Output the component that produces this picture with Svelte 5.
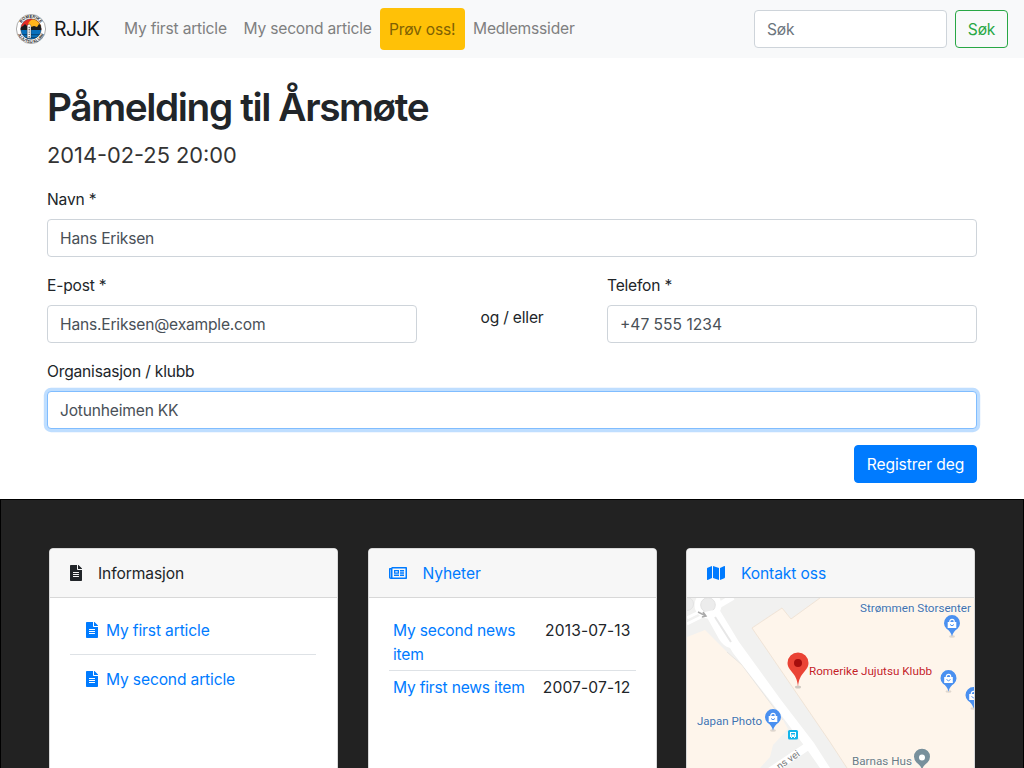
<script>
  const file = 'M224 136V0H24C10.7 0 0 10.7 0 24v464c0 13.3 10.7 24 24 24h336c13.3 0 24-10.7 24-24V160H248c-13.2 0-24-10.8-24-24zm64 236c0 6.6-5.4 12-12 12H108c-6.6 0-12-5.4-12-12v-8c0-6.6 5.4-12 12-12h168c6.6 0 12 5.4 12 12v8zm0-64c0 6.6-5.4 12-12 12H108c-6.6 0-12-5.4-12-12v-8c0-6.6 5.4-12 12-12h168c6.6 0 12 5.4 12 12v8zm0-72v8c0 6.6-5.4 12-12 12H108c-6.6 0-12-5.4-12-12v-8c0-6.6 5.4-12 12-12h168c6.6 0 12 5.4 12 12zm96-114.1v6.1H256V0h6.1c6.4 0 12.5 2.5 17 7l97.9 98c4.5 4.5 7 10.6 7 16.9z';
  const newspaper = 'M552 64H112c-20.858 0-38.643 13.377-45.248 32H24c-13.255 0-24 10.745-24 24v272c0 30.928 25.072 56 56 56h496c13.255 0 24-10.745 24-24V88c0-13.255-10.745-24-24-24zM48 392V144h16v248c0 4.411-3.589 8-8 8s-8-3.589-8-8zm480 8H111.422c.374-2.614.578-5.283.578-8V112h416v288zM172 280h136c6.627 0 12-5.373 12-12v-96c0-6.627-5.373-12-12-12H172c-6.627 0-12 5.373-12 12v96c0 6.627 5.373 12 12 12zm28-80h80v40h-80v-40zm-40 140v-24c0-6.627 5.373-12 12-12h136c6.627 0 12 5.373 12 12v24c0 6.627-5.373 12-12 12H172c-6.627 0-12-5.373-12-12zm192 0v-24c0-6.627 5.373-12 12-12h104c6.627 0 12 5.373 12 12v24c0 6.627-5.373 12-12 12H364c-6.627 0-12-5.373-12-12zm0-144v-24c0-6.627 5.373-12 12-12h104c6.627 0 12 5.373 12 12v24c0 6.627-5.373 12-12 12H364c-6.627 0-12-5.373-12-12zm0 72v-24c0-6.627 5.373-12 12-12h104c6.627 0 12 5.373 12 12v24c0 6.627-5.373 12-12 12H364c-6.627 0-12-5.373-12-12z';
  const mapIcon = 'M0 117.66v346.32c0 11.32 11.43 19.06 21.94 14.86L160 416V32L20.12 87.95A32.006 32.006 0 0 0 0 117.66zM192 416l192 64V96L192 32v384zM554.06 33.16L416 96v384l139.88-55.95A31.996 31.996 0 0 0 576 394.34V48.02c0-11.32-11.43-19.06-21.94-14.86z';
  const articles = ['My first article', 'My second article'];
  const news = [
    { title: 'My second news item', date: '2013-07-13' },
    { title: 'My first news item', date: '2007-07-12' }
  ];
  const shops = [[952, 624], [948.5, 679], [973.5, 696], [773, 718]];
</script>

<div class="page">
  <nav class="navbar">
    <a class="brand" href="#top">
      <svg class="logo" viewBox="0 0 30 30" width="30" height="30">
        <defs>
          <clipPath id="disc"><circle cx="15" cy="15" r="10.3" /></clipPath>
          <path id="arc-top" d="M3.9 15a11.1 11.1 0 0 1 22.2 0" />
          <path id="arc-bottom" d="M1 15a14 14 0 0 0 28 0" />
        </defs>
        <circle cx="15" cy="15" r="14.6" fill="#fff" stroke="#777" stroke-width=".6" />
        <g clip-path="url(#disc)">
          <path fill="#e52b25" d="M4 4h22v12H4z" />
          <circle cx="18.5" cy="11.5" r="6.5" fill="#ffb51b" />
          <path fill="#151b20" d="M4 13.500l3-1.500 2-2 2 2 4 1 3-1 3 1 2-3 3 2v5H4z" />
          <path fill="#0870bd" d="M4 16h22v10H4z" />
          <path fill="#064b80" d="M4 20h22v1.200H4zM4 23h22v1H4z" />
          <path fill="#fff" stroke="#222" stroke-width=".4" d="M11.200 11.500l1.900-1.500 1.900 1.500v12.700h-3.800z" />
          <path stroke="#555" stroke-width="1.200" stroke-dasharray="1.4 .9" d="M13.200 12.800v11" />
        </g>
        <circle cx="15" cy="15" r="10.3" fill="none" stroke="#222" stroke-width=".4" />
        <text class="ring top"><textPath href="#arc-top" startOffset="50%" text-anchor="middle">ROMERIKE</textPath></text>
        <text class="ring"><textPath href="#arc-bottom" startOffset="50%" text-anchor="middle">JUJUTSU KLUBB</textPath></text>
      </svg>
      <span>RJJK</span>
    </a>
    <a class="nav-link first" href="#a1">My first article</a>
    <a class="nav-link second" href="#a2">My second article</a>
    <a class="nav-link try" href="#try">Prøv oss!</a>
    <a class="nav-link" href="#members">Medlemssider</a>
    <form class="search">
      <input class="control" placeholder="Søk" />
      <button class="btn outline" type="button">Søk</button>
    </form>
  </nav>

  <main>
    <h1>Påmelding til Årsmøte</h1>
    <p class="date">2014-02-25 20:00</p>
    <form>
      <div class="group">
        <label for="name">Navn *</label>
        <input id="name" class="control" value="Hans Eriksen" />
      </div>
      <div class="row">
        <div class="group">
          <label for="email">E-post *</label>
          <input id="email" class="control" value="Hans.Eriksen@example.com" />
        </div>
        <div class="or">og / eller</div>
        <div class="group">
          <label for="phone">Telefon *</label>
          <input id="phone" class="control phone" value="+47 555 1234" />
        </div>
      </div>
      <div class="group">
        <label for="org">Organisasjon / klubb</label>
        <input id="org" class="control focused" value="Jotunheimen KK" />
      </div>
      <div class="actions"><button class="btn primary" type="button">Registrer deg</button></div>
    </form>
  </main>

  <footer>
    <section class="card">
      <header>
        <svg viewBox="0 0 384 512" width="12" height="16"><path d={file} /></svg>
        <span>Informasjon</span>
      </header>
      <ul>
        {#each articles as title}
          <li>
            <a href="#article">
              <svg viewBox="0 0 384 512" width="12" height="16"><path d={file} /></svg><span>{title}</span>
            </a>
          </li>
        {/each}
      </ul>
    </section>

    <section class="card">
      <header class="link">
        <svg viewBox="0 0 576 512" width="18" height="16"><path d={newspaper} /></svg>
        <span>Nyheter</span>
      </header>
      <div class="news">
        {#each news as item}
          <div class="item"><a href="#news">{item.title}</a><span>{item.date}</span></div>
        {/each}
      </div>
    </section>

    <section class="card">
      <header class="link">
        <svg viewBox="0 0 576 512" width="18" height="16"><path d={mapIcon} /></svg>
        <span>Kontakt oss</span>
      </header>
      <svg class="map" viewBox="687 598 287 170" width="287" height="170">
        <defs>
          <g id="shop">
            <ellipse cx="0" cy="12.5" rx="3" ry="1.2" fill="#000" opacity=".12" />
            <path fill="#4a90f0" d="M0 12.5C-1 8.500-3 6.500-5.500 4.800A8 8 0 1 1 5.500 4.800C3 6.500 1 8.500 0 12.500z" />
            <path fill="#fff" d="M-4.300-2h8.600v6h-8.600z" />
            <path fill="none" stroke="#fff" stroke-width="1.200" d="M-2.200-1.500v-1a2.200 2.200 0 0 1 4.400 0v1" />
            <path fill="none" stroke="#4a90f0" stroke-width="1" d="M-2 .5q2 2.600 4 0" />
          </g>
        </defs>
        <path fill="#f1f1f0" d="M687 598h287v170H687z" />
        <path fill="#fef5eb" d="M752 628l30-20 9 11 29-21h154v170H847l-17-26z" />
        <path fill="#fef5eb" d="M687 637l18-7 22 22 15 13 41 55 5 9-15 16-3 12-10 11h-73z" />
        <path fill="none" stroke="#eee0d1" stroke-width=".8" d="M820 598l-29 21-9-11-30 20 78 114 17 26" />
        <path fill="none" stroke="#e9e6e2" stroke-width="1" d="M727 652l15 13 41 55" />
        <path fill="none" stroke="#fff" stroke-width="3" d="M687 618l12-6M687 624l14-7" />
        <path fill="none" stroke="#fff" stroke-width="6" d="M716 607l17-10" />
        <circle cx="708" cy="605" r="10" fill="none" stroke="#fff" stroke-width="7" />
        <circle cx="708" cy="605" r="7.300" fill="#ececec" stroke="#e2e2e2" />
        <circle cx="687" cy="604" r="6.500" fill="#ececec" stroke="#e2e2e2" />
        <path fill="#fff" d="M704 612l15-3 20 33 42 58 33 43 16 25h-10l-14-20-34-45-39-50-3-5q-7-2-11-9z" />
        <path fill="none" stroke="#e7e7e7" stroke-width="2" d="M715 617l16 25" />
        <path fill="none" stroke="#fff" stroke-width="8" d="M808 746l-43 29" />
        <path fill="none" stroke="#aaa" stroke-width="1.500" d="M698 612l8 4m-3-4l3 4-4 1" />
        <ellipse cx="798" cy="687" rx="3" ry="1.500" fill="#000" opacity=".18" />
        <path fill="#ea4335" d="M798 686.500c-1-8-2.500-10-6.500-15-3-3.500-4-6-4-8.500a10.500 10.500 0 0 1 21 0c0 2.500-1 5-4 8.500-4 5-5.500 7-6.500 15z" />
        <circle cx="798" cy="663" r="4" fill="#a50d0d" />
        {#each shops as [x, y]}
          <use href="#shop" x={x} y={y} />
        {/each}
        <path fill="#78909c" d="M922 770c-1-4-3-5.500-5.500-7.500a8 8 0 1 1 11 0c-2.500 2-4.500 3.500-5.500 7.500z" />
        <circle cx="922" cy="757.500" r="3" fill="#fff" />
        <rect x="788" y="730" width="10" height="9.500" rx="1.500" fill="#13b5ea" />
        <path fill="#fff" d="M790 732h6v5h-1v1h-1v-1h-2v1h-1v-1h-1z" />
        <path fill="#13b5ea" d="M791 733h4v1.500h-4zM791 735.500h1v.8h-1zM794 735.500h1v.8h-1z" />
        <g class="place">
          <text x="860" y="611.500" textLength="111" lengthAdjust="spacingAndGlyphs">Strømmen Storsenter</text>
          <text x="697" y="725" textLength="65" lengthAdjust="spacingAndGlyphs">Japan Photo</text>
          <text class="club" x="809" y="675" textLength="123" lengthAdjust="spacingAndGlyphs">Romerike Jujutsu Klubb</text>
          <text class="grey" x="852" y="765" textLength="60" lengthAdjust="spacingAndGlyphs">Barnas Hus</text>
          <text class="street" transform="translate(779.500 770) rotate(-35)">ns vei</text>
        </g>
      </svg>
    </section>
  </footer>
</div>

<style>
  :global(body) { margin: 0; }
  .page {
    height: 768px; overflow: hidden; display: flex; flex-direction: column;
    font: 15.6px/24px Inter, "Liberation Sans", sans-serif;
    letter-spacing: -0.2px; color: #212529; background: #fff;
  }
  .page *, .page { box-sizing: border-box; }
  a { color: #007bff; text-decoration: none; }
  svg { fill: currentColor; flex: none; }
  .navbar { display: flex; align-items: center; height: 58px; padding: 0 16px; background: #f8f9fa; flex: none; }
  .brand { display: flex; align-items: center; gap: 8px; width: 84px; margin-right: 16px; color: #151719; font-size: 19.4px; letter-spacing: -0.6px; }
  .ring { font: 700 4px "Liberation Sans", sans-serif; letter-spacing: 0; fill: #222; }
  .top { font-size: 4.2px; }
  .nav-link { padding: 8px; color: #7f8080; white-space: nowrap; }
  .first { width: 119.5px; }
  .second { width: 144.5px; }
  .try { width: 85px; height: 42px; padding: 10px 9px 8px; background: #ffc107; color: #806104; border-radius: 4px; }
  .search { display: flex; gap: 8px; margin-left: auto; }
  .search .control { width: 193px; }
  .control {
    display: block; width: 100%; height: 38px; padding: 6px 12px; font: inherit; letter-spacing: inherit;
    color: #495057; border: 1px solid #ced4da; border-radius: 4px; background: #fff; outline: none;
  }
  .control::placeholder { color: #6c757d; opacity: 1; }
  .phone { letter-spacing: 0; }
  .focused { border-color: #80bdff; box-shadow: 0 0 0 3.2px rgba(0, 123, 255, .25); }
  .btn { height: 38px; padding: 1px 0 0; font: inherit; letter-spacing: inherit; border-radius: 4px; }
  .outline { width: 53px; color: #28a745; border: 1px solid #28a745; background: transparent; }
  .primary { width: 123px; color: #fff; background: #007bff; border: 1px solid #007bff; letter-spacing: -0.1px; }
  main { height: 441px; padding: 25px 47px 0; flex: none; }
  h1 { margin: 0 0 8px; font-size: 38.8px; line-height: 48px; font-weight: 600; letter-spacing: -1.4px; }
  .date { margin: 0 0 16px; font-size: 21.8px; line-height: 32px; color: #333; letter-spacing: 0; }
  label { display: block; padding-top: 1px; margin-bottom: 7px; }
  .group { margin-bottom: 16px; }
  .row { display: grid; grid-template-columns: 370px 130px 370px; gap: 30px; }
  .or { text-align: center; padding-top: 33px; }
  .actions { display: flex; justify-content: flex-end; }
  footer { flex: 1; display: grid; grid-template-columns: repeat(3, 1fr); gap: 29.5px; padding: 48px 48px 0; background: #222; border: 1px solid #000; border-bottom: 0; }
  .card { height: 320px; background: #fff; border: 1px solid #d9d9d9; border-radius: 4px; overflow: hidden; }
  header { display: flex; align-items: center; gap: 16px; height: 49px; padding: 0 20px; background: #f7f7f7; border-bottom: 1px solid #d8d8d8; }
  header span { padding-top: 1px; letter-spacing: -0.1px; }
  .link { color: #007bff; }
  ul { list-style: none; margin: 0; padding: 8px 21px 0 20px; }
  li { height: 49px; padding: 12px 16px; }
  li:first-child { height: 48px; }
  li + li { border-top: 1px solid #dee2e6; }
  li a { display: flex; align-items: center; gap: 8px; letter-spacing: -0.15px; }
  li span { position: relative; top: 1px; }
  .news { padding: 16px 20px; }
  .item { display: grid; grid-template-columns: 1fr auto; column-gap: 12px; padding: 5px 5px 3px 4.5px; }
  .item span { letter-spacing: 0.15px; }
  .item + .item { border-top: 1px solid #dee2e6; }
  .map { display: block; width: 100%; height: 170px; }
  .place { font: 11.5px Roboto, sans-serif; letter-spacing: 0; fill: #4272ad; stroke: #fff; stroke-width: .6px; paint-order: stroke; }
  .club { fill: #c5221f; }
  .grey { fill: #6b7c85; }
  .street { fill: #777; font-size: 10px; }
</style>
